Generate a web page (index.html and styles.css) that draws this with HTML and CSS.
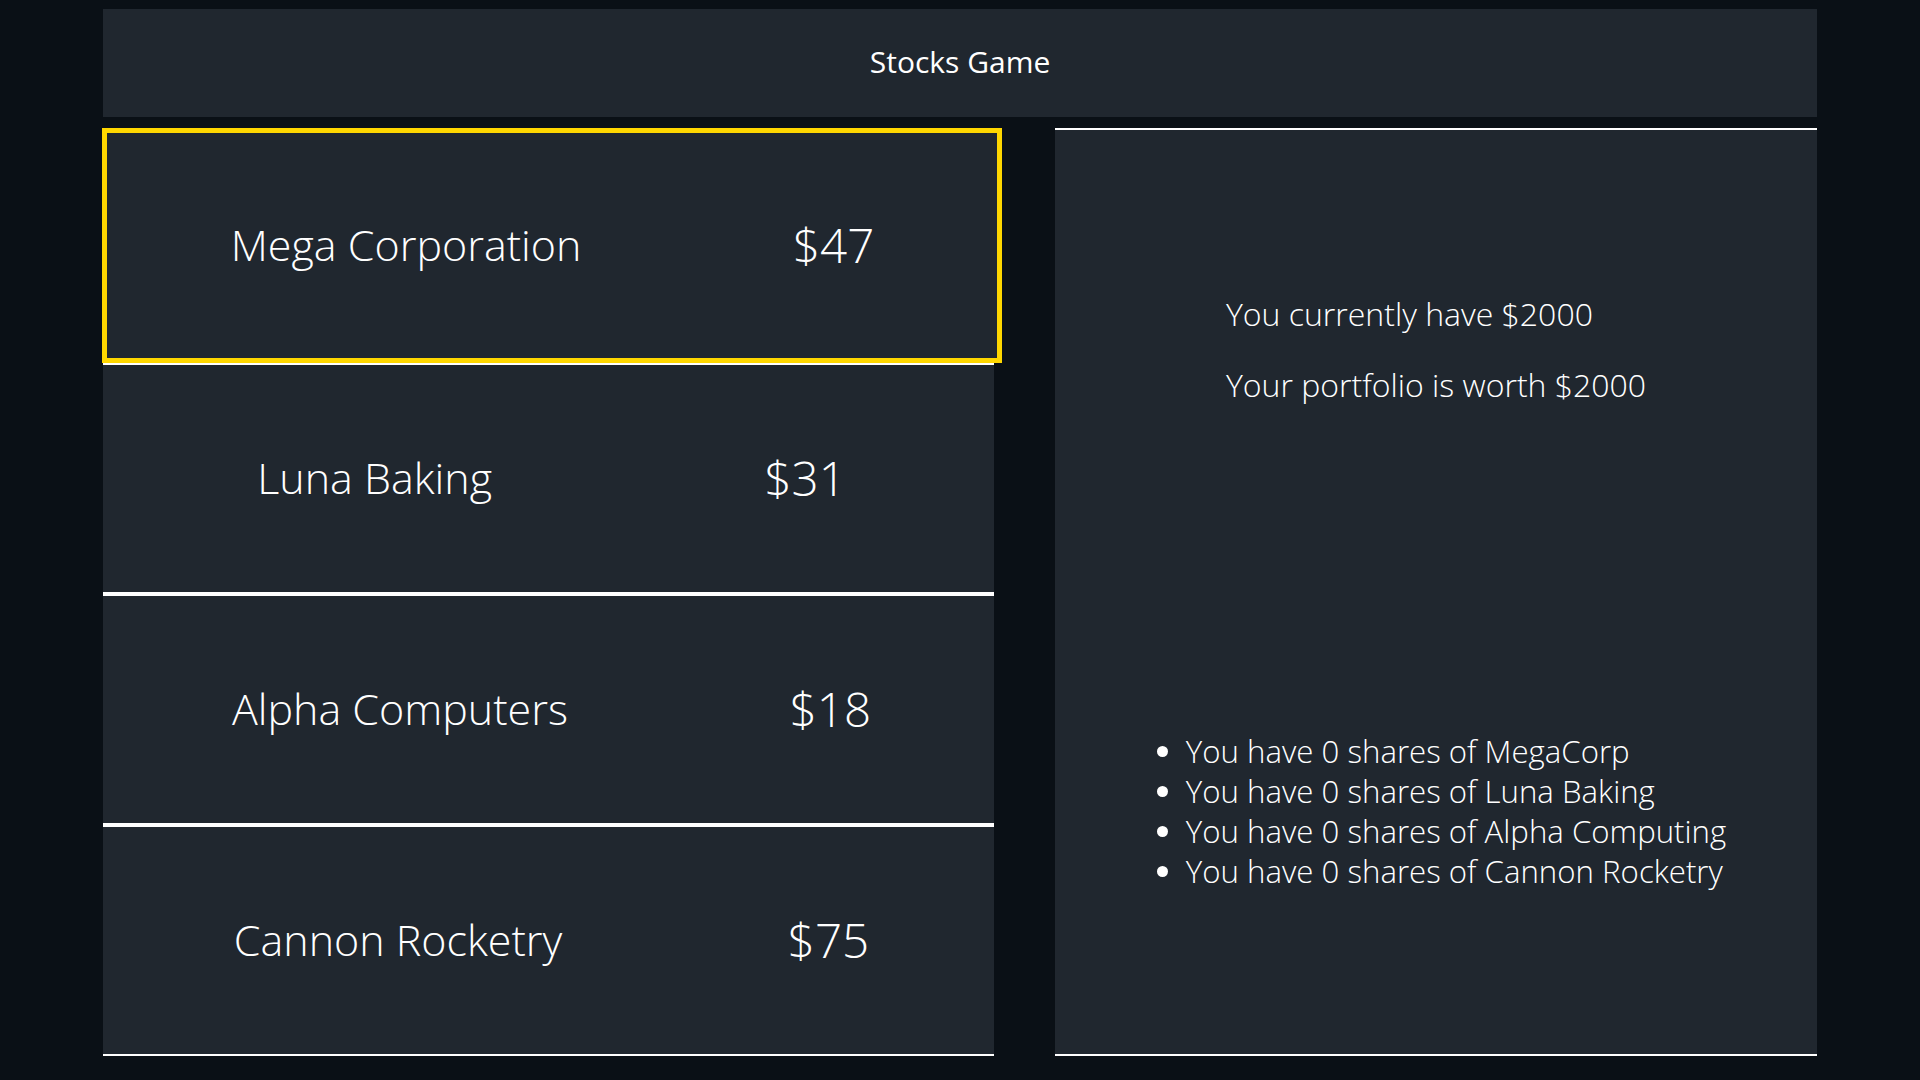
FILE: index.html
```html
<!DOCTYPE html>
<html lang="en">
<head>
<meta charset="utf-8">
<title>Stocks Game</title>
<link rel="stylesheet" href="styles.css">
</head>
<body>
<div class="app">
  <header class="topbar"><h1 class="title">Stocks Game</h1></header>
  <main class="board">
    <section class="stocks">
      <div class="stock selected"><span class="name">Mega Corporation</span><span class="price">$47</span></div>
      <div class="stock"><span class="name">Luna Baking</span><span class="price">$31</span></div>
      <div class="stock"><span class="name">Alpha Computers</span><span class="price">$18</span></div>
      <div class="stock"><span class="name">Cannon Rocketry</span><span class="price">$75</span></div>
    </section>
    <section class="portfolio">
      <div class="summary">
        <p>You currently have $2000</p>
        <p>Your portfolio is worth $2000</p>
      </div>
      <ul class="holdings">
        <li>You have 0 shares of MegaCorp</li>
        <li>You have 0 shares of Luna Baking</li>
        <li>You have 0 shares of Alpha Computing</li>
        <li>You have 0 shares of Cannon Rocketry</li>
      </ul>
    </section>
  </main>
</div>
</body>
</html>
```

FILE: styles.css
```css
html, body {
  margin: 0;
  padding: 0;
  background: #0a1016;
  color: #ffffff;
  font-family: "Open Sans", "Noto Sans", sans-serif;
  font-weight: 300;
}
.app {
  width: 1714px;
  margin: 0 auto;
  padding-top: 9px;
}
.topbar {
  height: 108px;
  background: #20272f;
  display: flex;
  align-items: center;
  justify-content: center;
}
.title {
  margin: 0;
  font-size: 30px;
  font-weight: 400;
  line-height: 40px;
  padding-bottom: 2px;
}
.board {
  margin-top: 11px;
  display: grid;
  grid-template-columns: 891px 762px;
  column-gap: 61px;
  height: 928px;
}
.stocks {
  display: flex;
  flex-direction: column;
}
.stock {
  box-sizing: border-box;
  height: 231px;
  background: #20272f;
  border-top: 2px solid #ffffff;
  border-bottom: 2px solid #ffffff;
  display: flex;
  align-items: center;
  justify-content: space-around;
  padding: 0 12px 2px 18px;
}
.stock.selected {
  height: 235px;
  border: 5px solid #ffd700;
  margin-left: -1px;
  margin-right: -8px;
  padding: 0 17px 2px 18px;
}
.name {
  font-size: 43px;
}
.price {
  font-size: 47.5px;
}
.portfolio {
  background: #20272f;
  border-top: 2px solid #ffffff;
  border-bottom: 2px solid #ffffff;
  display: flex;
  flex-direction: column;
  justify-content: space-around;
  align-items: center;
}
.summary {
  font-size: 32px;
}
.summary p {
  margin: 30px 0;
  line-height: 41px;
}
.holdings {
  font-size: 31.2px;
  line-height: 40px;
  margin: 30px 0;
  padding-left: 40px;
}
```
